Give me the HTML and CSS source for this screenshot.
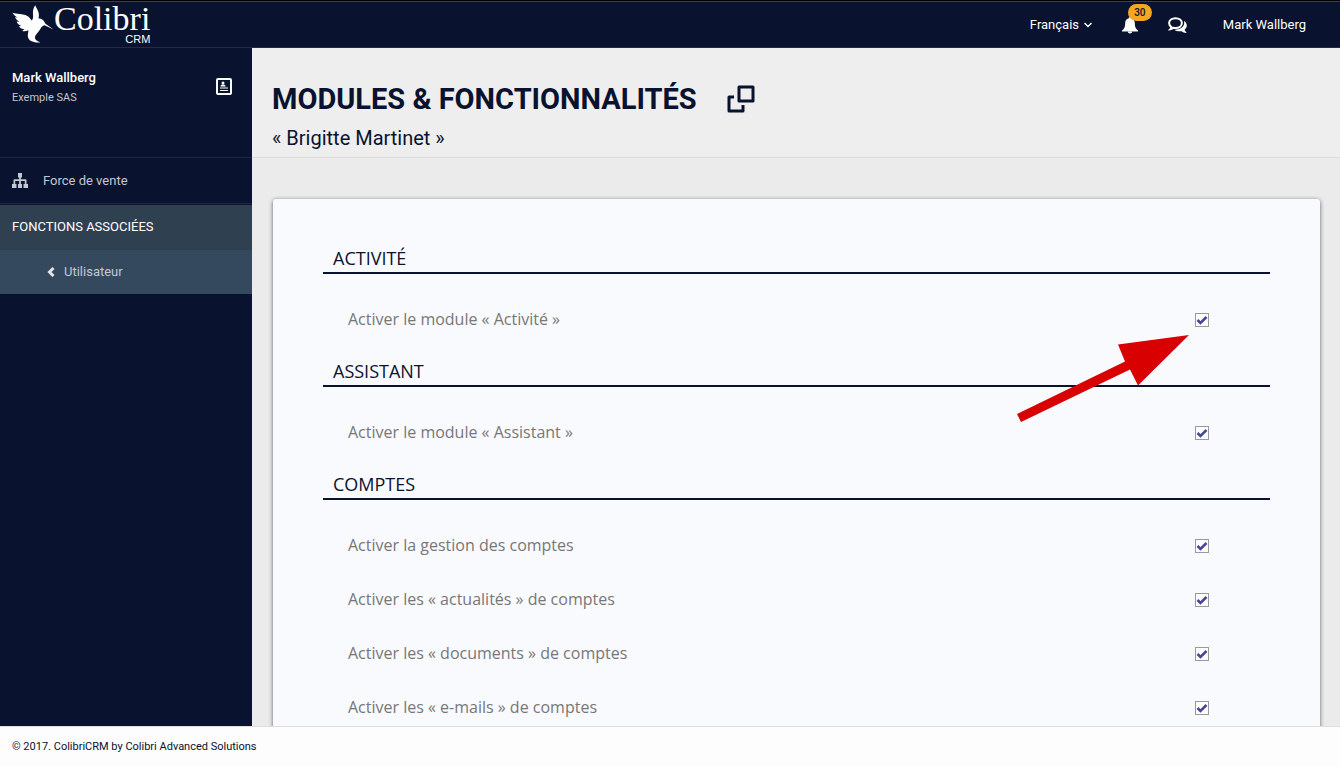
FILE: index.html
```html
<!DOCTYPE html>
<html lang="fr">
<head>
    <meta charset="UTF-8">
    <meta name="viewport" content="width=device-width, initial-scale=1.0">
    <title>Modules &amp; fonctionnalités - Colibri CRM</title>
    <link rel="stylesheet" href="styles.css">
</head>
<body>
    <header class="topbar">
        <a class="logo" href="#">
            <svg class="logo-bird" viewBox="0 0 128 116" aria-hidden="true">
                <path d="M1 24 C10 27 22 27 33 29 C44 31 51 35 55 41 L60 47 C64 44 65 38 64 30 C63 18 65 8 71 1 C73 7 77 13 80 20 C83 27 82 34 81 41 C88 40 95 44 99 52 L102 57 L127 75 L99 62 C93 64 89 68 86 74 C80 83 71 91 70 98 C69 106 77 111 86 114 C76 116 64 113 58 110 C51 106 48 100 48 94 C48 88 50 82 50 77 C44 80 37 81 31 79 L38 73 C30 74 24 70 21 65 L29 64 C21 61 16 57 14 50 L23 52 C15 47 11 43 9 37 L17 39 C9 34 4 30 1 24 Z"/>
            </svg>
            <span class="logo-text">
                <span class="logo-name">Colibri</span>
                <span class="logo-sub">CRM</span>
            </span>
        </a>
        <nav class="topnav">
            <label class="lang">
                <select class="lang-select" aria-label="Langue">
                    <option selected>Français</option>
                    <option>English</option>
                </select>
                <svg class="lang-arrow" viewBox="0 0 8 6" aria-hidden="true"><path d="M.5 1L4 4.500 7.500 1"/></svg>
            </label>
            <button class="icon-button bell" type="button" aria-label="Notifications">
                <svg width="16" height="17" viewBox="0 0 16 17" aria-hidden="true">
                    <path d="M8 0c-.7 0-1.200.5-1.200 1.200C4.200 1.700 3.200 3.800 3.200 6c0 4-1 6-3.200 7.500V14.500h16V13.500C13.800 12 12.800 10 12.800 6c0-2.200-1-4.300-3.600-4.800C9.200.5 8.700 0 8 0z"/>
                    <path d="M5.800 14.500a2.200 2 0 0 0 4.400 0z"/>
                </svg>
                <span class="badge">30</span>
            </button>
            <button class="icon-button" type="button" aria-label="Messages">
                <svg width="19" height="17" viewBox="0 0 19 17" aria-hidden="true">
                    <path class="stroke" d="M7.500 1.200c3.700 0 6.400 2.100 6.400 4.900s-2.700 4.900-6.400 4.900c-.7 0-1.300-.1-1.900-.2-.9.700-1.900 1.200-3.200 1.400.6-.6.9-1.300 1-2.100C2 9.200 1.100 7.800 1.100 6.100c0-2.800 2.700-4.900 6.400-4.900z"/>
                    <path d="M16 4c1.700 1 2.800 2.600 2.800 4.500 0 1.700-.8 3.100-2.200 4.100.2 1 .8 1.900 1.800 2.700.2.300.1.600-.3.600-1.700-.1-3.200-.7-4.400-1.700-2.800.5-5.600-.1-7.400-1.500 4.900.2 9.900-2.300 9.900-6.700 0-.7-.1-1.400-.2-2z"/>
                </svg>
            </button>
            <a class="account" href="#">Mark Wallberg</a>
        </nav>
    </header>

    <div class="page">
        <aside class="sidebar">
            <div class="user">
                <div>
                    <div class="user-name">Mark Wallberg</div>
                    <div class="user-company">Exemple SAS</div>
                </div>
                <a class="user-card" href="#" aria-label="Fiche utilisateur">
                    <svg width="16" height="17" viewBox="0 0 16 17" aria-hidden="true">
                        <rect class="stroke" x="1" y="1" width="14" height="15" rx="1"/>
                        <circle cx="7" cy="5" r="1.500"/>
                        <path d="M4.500 8.500V7.500q1-1 2.500-1t2.500 1v1zM4 9.500h8v1H4zM4 12h8v1H4z"/>
                    </svg>
                </a>
            </div>
            <nav class="menu">
                <a class="menu-item" href="#">
                    <svg width="16" height="15" viewBox="0 0 16 15" aria-hidden="true">
                        <path d="M6 0h4v4.500H8.900v1.700h4.600q1 0 1 1V11H16v4h-4.500v-4h1.300V8H8.900v3H10v4H6v-4h1.100V8H3.200v3h1.300v4H0v-4h1.500V7.200q0-1 1-1h4.600V4.500H6z"/>
                    </svg>
                    Force de vente
                </a>
                <div class="menu-title">FONCTIONS ASSOCIÉES</div>
                <a class="menu-sub" href="#">
                    <svg width="8" height="10" viewBox="0 0 8 10" aria-hidden="true"><path d="M6.500 1L2.500 5l4 4"/></svg>
                    Utilisateur
                </a>
            </nav>
        </aside>

        <main class="content">
            <div class="page-header">
                <div class="page-title">
                    <h1>MODULES &amp; FONCTIONNALITÉS</h1>
                    <a class="open-link" href="#" aria-label="Ouvrir dans une fenêtre">
                        <svg width="28" height="28" viewBox="0 0 28 28" aria-hidden="true">
                            <path d="M12 2h14v14H12zM7 12H2v14h14v-6"/>
                        </svg>
                    </a>
                </div>
                <p class="page-subtitle">« Brigitte Martinet »</p>
            </div>

            <form class="card">
                <section class="module">
                    <h2>ACTIVITÉ</h2>
                    <div class="row">
                        <label for="activite">Activer le module « Activité »</label>
                        <input type="checkbox" id="activite" checked>
                        <svg class="pointer" width="172" height="87" viewBox="0 0 172 87" aria-hidden="true">
                            <path d="M172 0L101 9.500l7 17L0 79l4 8 109-52.500 8 16z"/>
                        </svg>
                    </div>
                </section>
                <section class="module">
                    <h2>ASSISTANT</h2>
                    <div class="row">
                        <label for="assistant">Activer le module « Assistant »</label>
                        <input type="checkbox" id="assistant" checked>
                    </div>
                </section>
                <section class="module">
                    <h2>COMPTES</h2>
                    <div class="row">
                        <label for="comptes">Activer la gestion des comptes</label>
                        <input type="checkbox" id="comptes" checked>
                    </div>
                    <div class="row">
                        <label for="actualites">Activer les « actualités » de comptes</label>
                        <input type="checkbox" id="actualites" checked>
                    </div>
                    <div class="row">
                        <label for="documents">Activer les « documents » de comptes</label>
                        <input type="checkbox" id="documents" checked>
                    </div>
                    <div class="row">
                        <label for="emails">Activer les « e-mails » de comptes</label>
                        <input type="checkbox" id="emails" checked>
                    </div>
                </section>
            </form>
        </main>
    </div>

    <footer class="footer">© 2017. ColibriCRM by Colibri Advanced Solutions</footer>
</body>
</html>
```
FILE: styles.css
```css
* {
    box-sizing: border-box;
}

body {
    display: flex;
    flex-direction: column;
    height: 100vh;
    margin: 0;
    font-family: Roboto, sans-serif;
    font-size: 13px;
    line-height: 20px;
    color: #09122e;
    background-color: #ebebeb;
}

a {
    color: inherit;
    text-decoration: none;
}

/* Top bar */
.topbar {
    display: flex;
    justify-content: space-between;
    flex: none;
    height: 48px;
    padding: 0 34px 0 12px;
    color: #fff;
    background-color: #09122e;
    border-top: 1px solid #000;
    border-bottom: 1px solid #232b45;
    box-shadow: inset 0 1px #3b404f;
}

.logo {
    display: flex;
    align-items: flex-start;
    padding-top: 4px;
}

.logo-bird {
    width: 42px;
    height: 38px;
    fill: #fff;
}

.logo-text {
    display: flex;
    flex-direction: column;
    align-items: flex-end;
}

.logo-name {
    font-family: "Liberation Serif", serif;
    font-size: 34px;
    line-height: 28px;
}

.logo-sub {
    font-family: "Liberation Sans", sans-serif;
    font-size: 11px;
    line-height: 12px;
}

.topnav {
    display: flex;
    align-items: center;
    padding-top: 2px;
}

.lang {
    display: flex;
    align-items: center;
    gap: 4px;
    margin-right: 30px;
}

.lang-select {
    padding: 0;
    font: inherit;
    color: inherit;
    background: none;
    border: none;
    appearance: none;
}

.lang-select option {
    color: #09122e;
}

.lang-arrow {
    width: 8px;
    height: 6px;
    fill: none;
    stroke: #fff;
    stroke-width: 1.4;
}

.icon-button {
    position: relative;
    display: flex;
    margin-right: 30px;
    padding: 0;
    color: #fff;
    background: none;
    border: none;
    cursor: pointer;
}

.icon-button svg {
    fill: #fff;
}

.icon-button .stroke {
    fill: none;
    stroke: #fff;
    stroke-width: 2;
}

.badge {
    position: absolute;
    top: -13px;
    left: 6px;
    width: 24px;
    border-radius: 9px;
    font-family: Roboto, sans-serif;
    font-size: 10px;
    font-weight: 500;
    line-height: 17px;
    text-align: center;
    color: #09122e;
    background-color: #f5a623;
}

.account {
    margin-left: 6px;
}

/* Page */
.page {
    display: flex;
    flex: 1;
    min-height: 0;
}

.sidebar {
    flex: none;
    width: 252px;
    color: #c3c7d1;
    background-color: #09122e;
}

.user {
    display: flex;
    justify-content: space-between;
    align-items: flex-start;
    height: 110px;
    padding: 20px 20px 0 12px;
    border-bottom: 1px solid #1f2841;
}

.user-name {
    font-weight: 500;
    color: #fff;
}

.user-company {
    font-size: 11px;
}

.user-card {
    padding-top: 10px;
}

.user-card svg {
    display: block;
    fill: #fff;
}

.user-card .stroke {
    fill: none;
    stroke: #fff;
    stroke-width: 2;
}

.menu-item {
    display: flex;
    align-items: center;
    gap: 15px;
    height: 46px;
    padding: 0 12px;
    border-bottom: 1px solid #1f2841;
}

.menu-item svg {
    fill: #c3c7d1;
}

.menu-title {
    margin-top: 1px;
    padding: 12px 12px 13px;
    color: #fff;
    background-color: #2f4050;
}

.menu-sub {
    display: flex;
    align-items: center;
    gap: 9px;
    padding: 12px 12px 12px 47px;
    background-color: #34495e;
}

.menu-sub svg {
    fill: none;
    stroke: #dfe3ea;
    stroke-width: 3;
}

.content {
    flex: 1;
    min-width: 0;
    overflow: hidden;
}

.page-header {
    height: 110px;
    padding: 32px 20px 0;
    background-color: #eee;
    border-bottom: 1px solid #dcdcdc;
}

.page-title {
    display: flex;
    align-items: center;
    gap: 30px;
}

.page-title h1 {
    margin: 0;
    font-size: 29px;
    font-weight: 700;
    line-height: 38px;
}

.open-link svg {
    display: block;
    fill: none;
    stroke: #09122e;
    stroke-width: 3;
    stroke-linejoin: round;
}

.page-subtitle {
    margin: 8px 0 0;
    font-size: 20px;
    line-height: 24px;
}

.card {
    margin: 41px 20px 20px 21px;
    padding: 47px 50px;
    font-family: "Open Sans", sans-serif;
    background-color: #f9fafe;
    border-radius: 3px;
    box-shadow: 0 1px 4px rgba(0, 0, 0, 0.6);
}

.module {
    margin-bottom: 12px;
}

.module h2 {
    margin: 0 0 19px;
    padding: 0 10px 2px;
    font-size: 18px;
    font-weight: 400;
    line-height: 24px;
    border-bottom: 2px solid #09122e;
}

.row {
    position: relative;
    display: flex;
    justify-content: space-between;
    align-items: center;
    height: 54px;
    padding: 0 61px 0 25px;
    font-size: 16px;
    color: #777;
}

.row label {
    padding-bottom: 2px;
}

.row input {
    width: 14px;
    height: 14px;
    margin: 0;
    background-color: #fff;
    border: 1px solid #999;
    appearance: none;
}

.row input:checked {
    background-image: url("data:image/svg+xml,%3Csvg xmlns='http://www.w3.org/2000/svg' viewBox='0 0 12 12'%3E%3Cpath d='M1.500 6l3 3 6-6' fill='none' stroke='%2347479a' stroke-width='2.6'/%3E%3C/svg%3E");
}

/* Arrow drawn over the first option */
.pointer {
    position: absolute;
    top: 42px;
    right: 81px;
    fill: #d80000;
}

/* Footer */
.footer {
    flex: none;
    padding: 10px 12px 9px;
    font-size: 11px;
    background-color: #fdfdfd;
    border-top: 1px solid #ddd;
}
```
